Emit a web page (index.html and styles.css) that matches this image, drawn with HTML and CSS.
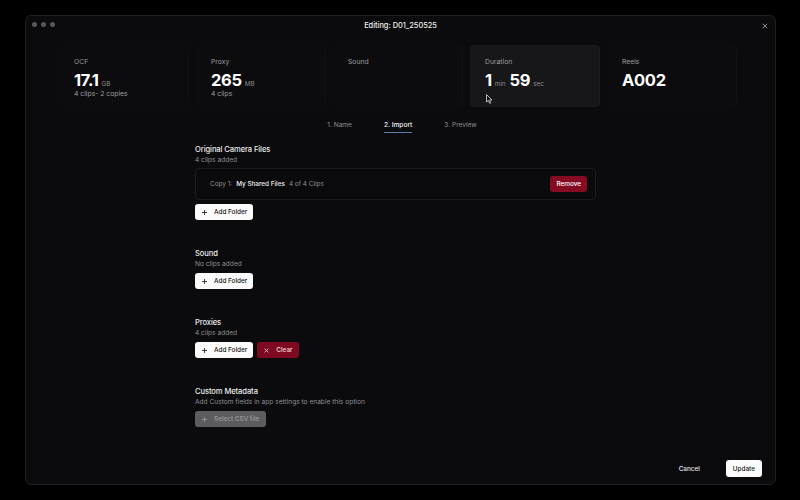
FILE: index.html
```html
<!DOCTYPE html>
<html>
<head>
<meta charset="utf-8">
<link rel="stylesheet" href="styles.css">
</head>
<body>
<div class="window">
  <div class="titlebar">
    <div class="dots"><span></span><span></span><span></span></div>
    <div class="title">Editing: D01_250525</div>
    <svg class="close" width="6" height="6" viewBox="0 0 6 6"><path d="M0.8 0.8 L5.2 5.2 M5.2 0.8 L0.8 5.2" stroke="#9a9a9e" stroke-width="0.9"/></svg>
  </div>

  <div class="stats">
    <div class="card">
      <div class="label">OCF</div>
      <div class="value">17.1<span class="unit">GB</span></div>
      <div class="sub">4 clips- 2 copies</div>
    </div>
    <div class="card">
      <div class="label">Proxy</div>
      <div class="value">265<span class="unit">MB</span></div>
      <div class="sub">4 clips</div>
    </div>
    <div class="card">
      <div class="label">Sound</div>
    </div>
    <div class="card active">
      <div class="label">Duration</div>
      <div class="value">1<span class="unit">min</span>59<span class="unit">sec</span></div>
      <svg class="cursor" width="7" height="10" viewBox="0 0 7 10"><path d="M0.5 0.5 L0.5 8 L2.3 6.4 L3.6 9.3 L4.8 8.8 L3.6 6 L6 6 Z" fill="#111" stroke="#ddd" stroke-width="0.8"/></svg>
    </div>
    <div class="card">
      <div class="label">Reels</div>
      <div class="value">A002</div>
    </div>
  </div>

  <div class="tabs">
    <div class="tab">1. Name</div>
    <div class="tab current">2. Import</div>
    <div class="tab">3. Preview</div>
  </div>

  <div class="content">
    <section class="group">
      <div class="gtitle">Original Camera Files</div>
      <div class="gsub">4 clips added</div>
      <div class="copybox">
        <div class="copyinfo"><span class="muted">Copy 1:</span><span class="strong">My Shared Files</span><span class="muted">4 of 4 Clips</span></div>
        <button class="btn danger small">Remove</button>
      </div>
      <div class="actions">
        <button class="btn light"><svg class="ico" width="5" height="5" viewBox="0 0 5 5"><path d="M2.5 0 V5 M0 2.5 H5" stroke="currentColor" stroke-width="0.8"/></svg>Add Folder</button>
      </div>
    </section>

    <section class="group">
      <div class="gtitle">Sound</div>
      <div class="gsub">No clips added</div>
      <div class="actions">
        <button class="btn light"><svg class="ico" width="5" height="5" viewBox="0 0 5 5"><path d="M2.5 0 V5 M0 2.5 H5" stroke="currentColor" stroke-width="0.8"/></svg>Add Folder</button>
      </div>
    </section>

    <section class="group">
      <div class="gtitle">Proxies</div>
      <div class="gsub">4 clips added</div>
      <div class="actions">
        <button class="btn light"><svg class="ico" width="5" height="5" viewBox="0 0 5 5"><path d="M2.5 0 V5 M0 2.5 H5" stroke="currentColor" stroke-width="0.8"/></svg>Add Folder</button>
        <button class="btn danger"><svg class="ico" width="5" height="5" viewBox="0 0 5 5"><path d="M0.6 0.6 L4.4 4.4 M4.4 0.6 L0.6 4.4" stroke="currentColor" stroke-width="0.8"/></svg>Clear</button>
      </div>
    </section>

    <section class="group">
      <div class="gtitle">Custom Metadata</div>
      <div class="gsub">Add Custom fields in app settings to enable this option</div>
      <div class="actions">
        <button class="btn disabled"><svg class="ico" width="5" height="5" viewBox="0 0 5 5"><path d="M2.5 0 V5 M0 2.5 H5" stroke="currentColor" stroke-width="0.8"/></svg>Select CSV file</button>
      </div>
    </section>
  </div>

  <div class="footer">
    <button class="btn ghost">Cancel</button>
    <button class="btn light update">Update</button>
  </div>
</div>
</body>
</html>
```

FILE: styles.css
```css
* { box-sizing: border-box; }
html, body { margin: 0; padding: 0; }
body {
  background: #000;
  width: 800px;
  height: 500px;
  font-family: Inter, "Noto Sans", "Liberation Sans", sans-serif;
  color: #e6e6e6;
  overflow: hidden;
  padding: 15px 24px 15px 25px;
}
.window {
  width: 751px;
  height: 470px;
  background: #0b0b0d;
  border: 1px solid #1e1e21;
  border-radius: 6px;
  display: flex;
  flex-direction: column;
}
.titlebar {
  height: 20px;
  display: flex;
  align-items: center;
  justify-content: space-between;
  padding: 0 7px 0 6px;
  position: relative;
}
.dots { display: flex; gap: 4px; margin-top: -4px; }
.dots span { width: 5px; height: 5px; border-radius: 50%; background: #58585c; }
.title {
  position: absolute;
  left: 0; right: 0; top: 5px;
  text-align: center;
  font-size: 7.4px;
  font-weight: 500;
  color: #f0f0f0;
}
.close { margin-top: 0; }

.stats {
  margin: 9px auto 0;
  display: grid;
  grid-template-columns: repeat(5, 130px);
  gap: 7px;
  padding-left: 33px;
  width: 751px;
}
.card {
  height: 62px;
  padding: 12px 15px 0;
  background: #0c0c0e;
  border-right: 1px solid #121215;
  border-radius: 4px;
  position: relative;
}
.card.active { background: #17171a; border-color: #1c1c1f; }
.label { font-size: 6.8px; line-height: 10px; color: #9c9ca0; }
.value {
  margin-top: 7px;
  font-size: 16.5px;
  line-height: 12px;
  font-weight: 700;
  color: #fff;
  letter-spacing: -0.3px;
}
.unit { font-size: 6.3px; font-weight: 400; color: #8c8c90; margin: 0 4px 0 3px; letter-spacing: 0; }
.sub { font-size: 6.8px; line-height: 8px; color: #9c9ca0; margin-top: 0; }
.cursor { position: absolute; left: 16px; top: 49px; }

.tabs {
  margin-top: 13px;
  display: flex;
  justify-content: center;
  gap: 32px;
  padding-left: 3px;
  height: 16px;
}
.tab {
  font-size: 6.6px;
  line-height: 10px;
  color: #8e8e92;
}
.tab.current {
  color: #f2f2f2;
  font-weight: 500;
  border-bottom: 1.5px solid #5b7fa6;
  height: 13px;
}

.content {
  margin-left: 169px;
  width: 401px;
  margin-top: 9px;
  display: flex;
  flex-direction: column;
  gap: 29px;
}
.gtitle { font-size: 7.6px; line-height: 10px; font-weight: 500; color: #ececec; letter-spacing: -0.1px; }
.gsub { font-size: 6.6px; line-height: 10px; color: #8e8e92; }
.copybox {
  margin-top: 3px;
  height: 32px;
  border: 1px solid #1b1b1e;
  border-radius: 4px;
  background: #0a0a0c;
  display: flex;
  align-items: center;
  justify-content: space-between;
  padding: 0 8px 0 14px;
}
.copyinfo { font-size: 6.4px; display: flex; gap: 4px; }
.muted { color: #8e8e92; }
.strong { color: #f0f0f0; font-weight: 500; }
.actions { margin-top: 4px; display: flex; gap: 4px; }
.btn {
  font-family: inherit;
  border: none;
  border-radius: 3px;
  height: 16px;
  padding: 0 6px 0 6px;
  font-size: 6.4px;
  font-weight: 500;
  display: inline-flex;
  align-items: center;
  cursor: pointer;
}
.btn .ico { margin: 0 7px 0 1px; flex: none; }
.btn.light { background: #fbfbfb; color: #111; }
.btn.danger { background: #7d0a20; color: #f2d9dd; }
.btn.small { padding: 0 6px; height: 16px; background: #850b22; color: #fff; }
.btn.disabled { background: #5c5c5f; color: #9d9da0; padding: 0 7px 0 6px; }
.btn.ghost { background: transparent; color: #e8e8e8; padding: 0; }

.footer {
  margin-top: auto;
  display: flex;
  justify-content: flex-end;
  align-items: center;
  gap: 26px;
  padding: 0 13px 7px 0;
}
.update { padding: 0 7px; height: 17px; }
```
